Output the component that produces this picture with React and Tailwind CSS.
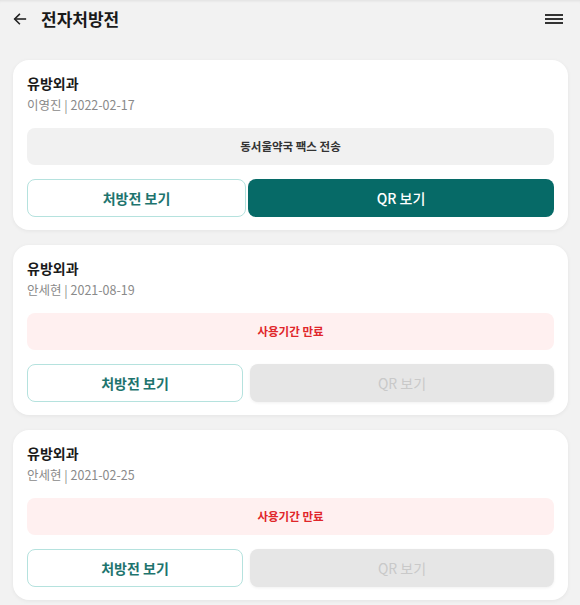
import React from 'react';

const FONT = { fontFamily: '"Noto Sans CJK KR", "Noto Sans", sans-serif' };

const PRESCRIPTIONS = [
  { id: 1, dept: '유방외과', doctor: '이영진', date: '2022-02-17', status: 'fax', message: '동서울약국 팩스 전송' },
  { id: 2, dept: '유방외과', doctor: '안세현', date: '2021-08-19', status: 'expired', message: '사용기간 만료' },
  { id: 3, dept: '유방외과', doctor: '안세현', date: '2021-02-25', status: 'expired', message: '사용기간 만료' },
];

const PrescriptionCard = ({ item }) => {
  const expired = item.status === 'expired';
  return (
    <div className="bg-white rounded-[16px] shadow-[0_1px_4px_rgba(0,0,0,0.06)] px-[14px] pt-[13px] pb-[13px]">
      <h3 className="text-[14px] font-bold text-[#1a1a1a] leading-[20px]">{item.dept}</h3>
      <p className="text-[12.5px] text-[#8a8a8a] leading-[18px] mt-[3px]">
        {item.doctor} | {item.date}
      </p>
      <div
        className={`mt-[14px] h-[37px] rounded-[8px] flex items-center justify-center text-[11.5px] font-bold ${
          expired ? 'bg-[#fff0f0] text-[#e0262a]' : 'bg-[#f1f1f1] text-[#333333]'
        }`}
      >
        {item.message}
      </div>
      <div className={`mt-[14px] flex ${expired ? 'gap-[7px]' : 'gap-[2px]'}`}>
        <button className={`${expired ? 'w-[216px]' : 'w-[219px]'} h-[38px] rounded-[8px] bg-white border border-[#b5e2de] text-[#1e746e] text-[14px] font-bold`}>
          처방전 보기
        </button>
        {expired ? (
          <button disabled className="flex-1 h-[38px] rounded-[8px] bg-[#e6e6e6] text-[#c9c9c9] text-[14px] shadow-[0_1px_3px_rgba(0,0,0,0.06)]">
            QR 보기
          </button>
        ) : (
          <button className="flex-1 h-[38px] rounded-[8px] bg-[#066a67] text-white text-[14px] font-medium">
            QR 보기
          </button>
        )}
      </div>
    </div>
  );
};

export default function App() {
  return (
    <div style={FONT} className="w-[580px] h-[605px] overflow-hidden bg-[#f2f2f2]">
      {/* Header */}
      <div className="h-[38px] flex items-center justify-between pl-[12px] pr-[17px] shadow-[inset_0_3px_3px_-2px_rgba(0,0,0,0.08)]">
        <div className="flex items-center gap-[13px]">
          <svg width="16" height="16" viewBox="0 0 24 24" fill="none" stroke="#222" strokeWidth="2.4" strokeLinecap="square">
            <path d="M20 12H5" />
            <path d="M11 5l-7 7 7 7" />
          </svg>
          <h1 className="text-[17px] font-bold text-[#1a1a1a]">전자처방전</h1>
        </div>
        <svg width="18" height="14" viewBox="0 0 18 14" fill="#333">
          <rect x="0" y="2" width="18" height="2" />
          <rect x="0" y="6" width="18" height="2" />
          <rect x="0" y="10" width="18" height="2" />
        </svg>
      </div>

      {/* List */}
      <div className="flex flex-col gap-[15px] pl-[13px] pr-[12px] mt-[22px]">
        {PRESCRIPTIONS.map(p => (
          <PrescriptionCard key={p.id} item={p} />
        ))}
      </div>
    </div>
  );
}
